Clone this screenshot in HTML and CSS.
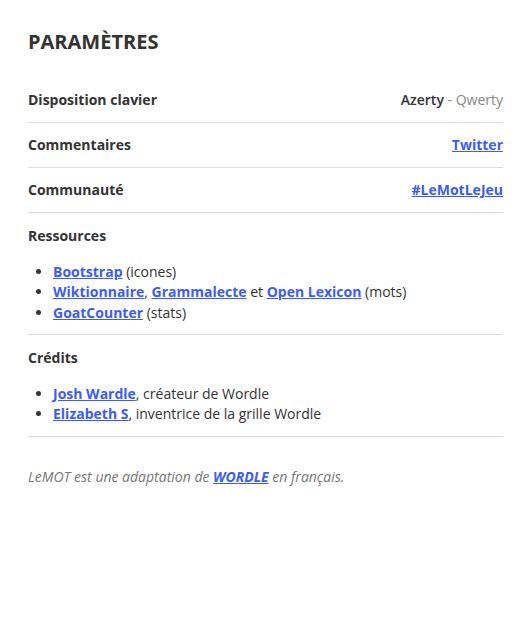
FILE: index.html
```html
<!DOCTYPE html>
<html lang="fr">
<head>
<meta charset="utf-8">
<title>Paramètres</title>
<link rel="stylesheet" href="styles.css">
</head>
<body>
<div class="panel">
  <h2 class="title">PARAMÈTRES</h2>
  <div class="row">
    <span class="label">Disposition clavier</span>
    <span class="value"><span class="active">Azerty</span> <span class="sep">-</span> <span class="inactive">Qwerty</span></span>
  </div>
  <div class="row">
    <span class="label">Commentaires</span>
    <a class="link" href="#">Twitter</a>
  </div>
  <div class="row">
    <span class="label">Communauté</span>
    <a class="link" href="#">#LeMotLeJeu</a>
  </div>
  <div class="block">
    <div class="label">Ressources</div>
    <ul class="list">
      <li><a class="link" href="#">Bootstrap</a> (icones)</li>
      <li><a class="link" href="#">Wiktionnaire</a>, <a class="link" href="#">Grammalecte</a> et <a class="link" href="#">Open Lexicon</a> (mots)</li>
      <li><a class="link" href="#">GoatCounter</a> (stats)</li>
    </ul>
  </div>
  <div class="block">
    <div class="label">Crédits</div>
    <ul class="list">
      <li><a class="link" href="#">Josh Wardle</a>, créateur de Wordle</li>
      <li><a class="link" href="#">Elizabeth S</a>, inventrice de la grille Wordle</li>
    </ul>
  </div>
  <p class="footer">LeMOT est une adaptation de <a class="link" href="#">WORDLE</a> en français.</p>
</div>
</body>
</html>
```
FILE: styles.css
```css
html, body {
  margin: 0;
  padding: 0;
  background: #fff;
}
body {
  font-family: "Open Sans", "Noto Sans", sans-serif;
  font-size: 14px;
  color: #333;
}
.panel {
  padding: 28px 27px 0 28px;
}
.title {
  margin: 0 0 22px 0;
  font-size: 20px;
  font-weight: 700;
  line-height: 28px;
}
.row {
  display: flex;
  justify-content: space-between;
  align-items: center;
  padding: 11px 0 11px;
  line-height: 22px;
  border-bottom: 1px solid #dcdcdc;
}
.label {
  font-weight: 700;
}
.active {
  font-weight: 600;
}
.link {
  color: #3b5bfd;
  font-weight: 700;
  text-decoration: underline;
}
.inactive, .sep {
  color: #888;
}
.block {
  padding: 12px 0 11px;
  line-height: 22px;
  border-bottom: 1px solid #dcdcdc;
}
.list {
  margin: 14.5px 0 0 0;
  padding-left: 25px;
  line-height: 20.5px;
}
.footer {
  margin: 29px 0 0 0;
  font-style: italic;
  color: #777;
  line-height: 22px;
}
```
